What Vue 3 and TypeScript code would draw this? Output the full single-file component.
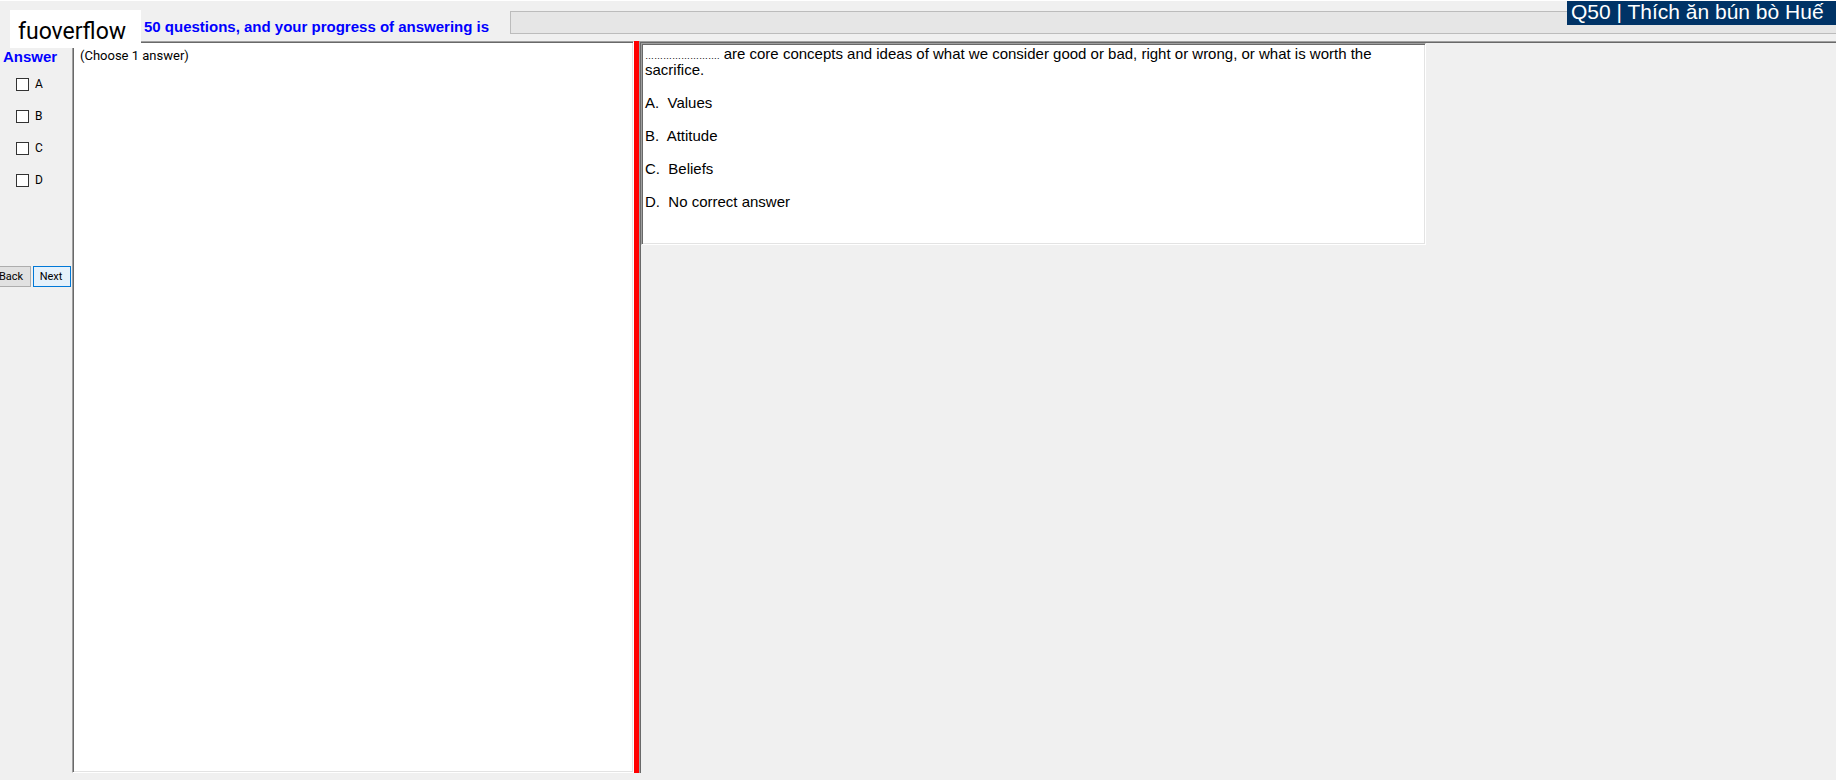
<script setup lang="ts">
import { ref } from 'vue'

interface Choice {
  key: string
  text: string
}

const choices: Choice[] = [
  { key: 'A', text: 'Values' },
  { key: 'B', text: 'Attitude' },
  { key: 'C', text: 'Beliefs' },
  { key: 'D', text: 'No correct answer' },
]

const selected = ref<string[]>([])
</script>

<template>
  <div class="exam">
    <header class="topbar">
      <p class="heading status">50 questions, and your progress of answering is</p>
      <div class="progress" role="progressbar" aria-valuemin="0" aria-valuemax="50" aria-valuenow="0"></div>
      <div class="brand">fuoverflow</div>
      <div class="tag">Q50 | Thích ăn bún bò Huế</div>
    </header>

    <main class="workspace">
      <form class="answers" @submit.prevent>
        <h2 class="heading">Answer</h2>
        <div class="options">
          <label v-for="choice in choices" :key="choice.key" class="option">
            <input v-model="selected" class="tick" type="checkbox" :value="choice.key" />
            <span>{{ choice.key }}</span>
          </label>
        </div>
        <div class="nav">
          <button type="button" class="btn">Back</button>
          <button type="button" class="btn active">Next</button>
        </div>
      </form>

      <section class="pane instructions">(Choose 1 answer)</section>
      <div class="splitter"></div>
      <section class="pane viewer">
        <article class="pane question">
          <p class="prompt">
            <span class="dots">…………………….</span>
            are core concepts and ideas of what we consider good or bad, right or wrong, or what is worth the sacrifice.
          </p>
          <p v-for="choice in choices" :key="choice.key" class="line">{{ choice.key }}.&nbsp; {{ choice.text }}</p>
        </article>
      </section>
    </main>
  </div>
</template>

<style>
body {
  margin: 0;
}
</style>

<style scoped>
.exam {
  box-sizing: border-box;
  min-height: 100vh;
  display: flex;
  flex-direction: column;
  padding-bottom: 7px;
  border-top: 1px solid #ffffff;
  background: #f0f0f0;
  color: #000000;
  font-family: Roboto, "Liberation Sans", sans-serif;
  font-size: 12px;
  overflow: hidden;
}

.topbar {
  position: relative;
  box-sizing: border-box;
  height: 40px;
  display: flex;
  align-items: flex-start;
  gap: 16px;
  padding: 10px 0 0 144px;
}

.heading {
  margin: 0;
  color: #0000ff;
  font-family: "Liberation Sans", Arial, sans-serif;
  font-size: 15px;
  font-weight: 700;
  line-height: 18px;
  white-space: nowrap;
}

.status {
  width: 350px;
  padding-top: 7px;
}

.progress {
  box-sizing: border-box;
  flex: 1;
  height: 23px;
  border: 1px solid #bcbcbc;
  border-right: 0;
  background: #e6e6e6;
}

.brand {
  position: absolute;
  z-index: 1;
  left: 10px;
  top: 9px;
  box-sizing: border-box;
  width: 131px;
  height: 38px;
  padding-left: 8px;
  background: #ffffff;
  font-size: 23px;
  line-height: 44px;
}

.tag {
  position: absolute;
  right: 0;
  top: -1px;
  box-sizing: border-box;
  width: 269px;
  height: 25px;
  padding-left: 4px;
  background: #003366;
  color: #ffffff;
  font-family: "Liberation Sans", Arial, sans-serif;
  font-size: 21px;
  line-height: 24px;
  white-space: nowrap;
}

.workspace {
  flex: 1;
  display: grid;
  grid-template-columns: 72px minmax(0, 562fr) 5px minmax(0, 1197fr);
}

.answers {
  overflow: hidden;
}

.answers .heading {
  padding: 7px 0 0 3px;
}

.options {
  display: grid;
  gap: 16px;
  padding: 10px 0 0 16px;
}

.option {
  display: flex;
  align-items: center;
  gap: 6px;
  height: 16px;
}

.tick {
  appearance: none;
  box-sizing: border-box;
  width: 13px;
  height: 13px;
  margin: 0;
  border: 1px solid #333333;
  background: #ffffff;
}

.tick:checked {
  background: #333333;
  box-shadow: inset 0 0 0 2px #ffffff;
}

.nav {
  display: flex;
  gap: 2px;
  margin: 78px 0 0 -7px;
}

.btn {
  box-sizing: border-box;
  width: 38px;
  height: 21px;
  padding: 1px 2px 0 0;
  border: 1px solid #adadad;
  background: #e1e1e1;
  color: #000000;
  font-family: inherit;
  font-size: 11px;
  line-height: 18px;
}

.btn.active {
  border-color: #0078d7;
  background: #e5f1fb;
}

.pane {
  box-sizing: border-box;
  border: 1px solid;
  border-color: #a0a0a0 #ffffff #ffffff #a0a0a0;
  box-shadow: inset 1px 1px #696969, inset -1px -1px #e3e3e3;
}

.instructions {
  padding: 6px 7px;
  background: #ffffff;
  font-size: 13px;
  line-height: 15px;
}

.splitter {
  background: #ff0000;
}

.viewer {
  border-right: 0;
  border-bottom: 0;
  box-shadow: inset 1px 1px #696969;
  padding: 1px;
}

.question {
  max-width: 785px;
  min-height: 202px;
  padding: 2px 3px 16px;
  background: #ffffff;
  font-family: "Liberation Sans", Arial, sans-serif;
  font-size: 15px;
  line-height: 16px;
}

.prompt,
.line {
  margin: 0 0 17px;
}

.dots {
  font-size: 9px;
  line-height: 9px;
}
</style>
